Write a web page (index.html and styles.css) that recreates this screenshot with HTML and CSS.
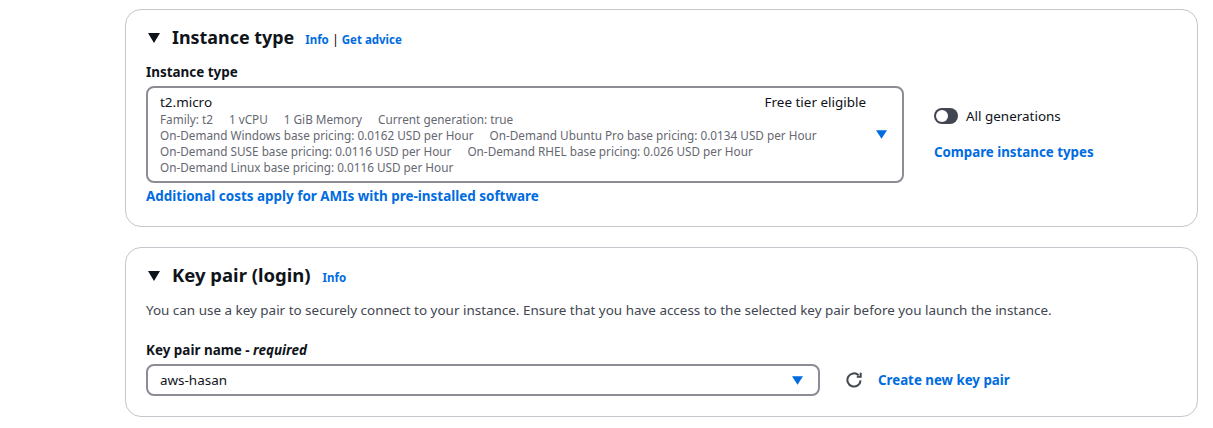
FILE: index.html
```html
<!DOCTYPE html>
<html lang="en">
<head>
<meta charset="utf-8">
<title>Launch instance</title>
<link rel="stylesheet" href="styles.css">
</head>
<body>
<main class="page">
  <section class="card card-instance">
    <header class="card-head">
      <svg class="caret" viewBox="0 0 12 10" width="12" height="10"><path d="M0 0h12L6 10z"/></svg>
      <h2 class="title">Instance type</h2>
      <span class="head-links"><a class="link">Info</a><span class="sep">|</span><a class="link">Get advice</a></span>
    </header>
    <div class="label label-instance">Instance type</div>
    <div class="instance-row">
      <div class="instance-col">
        <div class="select select-instance">
          <div class="option-main">
            <div class="option-top"><span>t2.micro</span><span class="free">Free tier eligible</span></div>
            <div class="tags"><span>Family: t2</span><span>1 vCPU</span><span>1 GiB Memory</span><span>Current generation: true</span></div>
            <div class="tags"><span>On-Demand Windows base pricing: 0.0162 USD per Hour</span><span>On-Demand Ubuntu Pro base pricing: 0.0134 USD per Hour</span></div>
            <div class="tags"><span>On-Demand SUSE base pricing: 0.0116 USD per Hour</span><span>On-Demand RHEL base pricing: 0.026 USD per Hour</span></div>
            <div class="tags"><span>On-Demand Linux base pricing: 0.0116 USD per Hour</span></div>
          </div>
          <svg class="arrow" viewBox="0 0 11 8.5" width="11" height="9"><path d="M0 0h11L5.5 8.5z"/></svg>
        </div>
        <a class="link link-costs">Additional costs apply for AMIs with pre-installed software</a>
      </div>
      <div class="side">
        <div class="toggle-row"><span class="toggle"><span class="knob"></span></span><span>All generations</span></div>
        <a class="link link-compare">Compare instance types</a>
      </div>
    </div>
  </section>
  <section class="card card-key">
    <header class="card-head">
      <svg class="caret" viewBox="0 0 12 10" width="12" height="10"><path d="M0 0h12L6 10z"/></svg>
      <h2 class="title">Key pair (login)</h2>
      <span class="head-links"><a class="link">Info</a></span>
    </header>
    <p class="desc">You can use a key pair to securely connect to your instance. Ensure that you have access to the selected key pair before you launch the instance.</p>
    <div class="label label-key">Key pair name - <em>required</em></div>
    <div class="key-row">
      <div class="select select-key">
        <span>aws-hasan</span>
        <svg class="arrow" viewBox="0 0 11 8.5" width="11" height="9"><path d="M0 0h11L5.5 8.5z"/></svg>
      </div>
      <svg class="refresh" viewBox="0 0 16 16" width="16" height="16"><path d="M14.6 8.4A6.6 6.6 0 1 1 12.6 3.2" /><path d="M14.7 0.8v3.9h-3.9" /></svg>
      <a class="link link-create">Create new key pair</a>
    </div>
  </section>
</main>
</body>
</html>
```
FILE: styles.css
```css
* { box-sizing: border-box; }
html, body { margin: 0; background: #fff; }
body {
  font-family: "Noto Sans", Roboto, sans-serif;
  font-size: 13.45px;
  color: #0f141a;
  overflow: hidden;
}
.page {
  padding: 9px 15px 0 125px;
  display: flex;
  flex-direction: column;
  gap: 20px;
}
.card {
  border: 1px solid #c6c6cd;
  border-radius: 16px;
  padding: 0 20px;
}
.card-instance { height: 218px; padding-top: 14px; }
.card-key { height: 170px; padding-top: 14px; }
.card-head { display: flex; align-items: center; height: 27px; }
.caret { fill: #0f141a; margin-left: 2px; flex: none; }
.title {
  margin: 0 0 1px 12px;
  font-size: 17.9px;
  font-weight: 700;
  line-height: 26px;
}
.card-key .title { font-size: 18.5px; margin-bottom: 2px; }
.head-links {
  margin-left: 11px;
  margin-top: 3px;
  font-size: 11.5px;
  font-weight: 700;
  display: flex;
  align-items: center;
}
.card-key .head-links { margin-left: 12px; }
.sep { margin: 0 2.5px 0 3px; font-size: 13.45px; font-weight: 400; line-height: 16px; color: #0f141a; }
.link { color: #006ce0; font-weight: 700; }
.label { font-weight: 700; line-height: 18px; }
.label-instance { margin-top: 12px; }
.label em { font-style: italic; }
.instance-row { display: flex; margin-top: 5px; }
.instance-col { width: 758px; flex: none; }
.select {
  border: 2px solid #8c8c94;
  border-radius: 8px;
  background: #fff;
  display: flex;
  align-items: center;
  justify-content: space-between;
  padding: 0 15px 0 12px;
}
.select-instance { height: 97px; padding-bottom: 2px; }
.select-instance .arrow { margin-top: 2px; }
.option-main { width: 708px; font-size: 11.75px; color: #656871; line-height: 16px; }
.option-top {
  display: flex;
  justify-content: space-between;
  font-size: 13.45px;
  color: #0f141a;
  line-height: 18px;
  padding-right: 2px;
}
.tags { display: flex; gap: 16px; white-space: nowrap; }
.arrow { fill: #006ce0; flex: none; }
.link-costs { display: block; margin-top: 4px; line-height: 18px; }
.side { margin-left: 30px; display: flex; flex-direction: column; margin-top: 21px; }
.toggle-row { display: flex; align-items: center; gap: 8px; line-height: 18px; }
.toggle {
  width: 24px; height: 16px; border-radius: 8px;
  background: #424650; display: flex; align-items: center; padding-left: 2px;
}
.knob { width: 12px; height: 12px; border-radius: 50%; background: #fff; }
.link-compare { margin-top: 18px; line-height: 18px; font-size: 13.3px; }
.desc { margin: 12px 0 0; line-height: 18px; color: #424650; }
.label-key { margin-top: 22px; }
.key-row { display: flex; align-items: center; margin-top: 5px; }
.select-key { width: 674px; height: 32px; }
.refresh { fill: none; stroke: #424650; stroke-width: 2; margin-left: 26px; flex: none; }
.link-create { margin-left: 16px; font-size: 13.3px; }
```
